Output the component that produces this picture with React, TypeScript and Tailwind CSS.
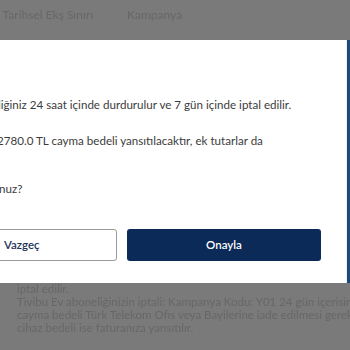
export default function App() {
  return (
    <div className="relative h-[350px] w-[350px] overflow-hidden bg-white font-['Lato','Noto_Sans',sans-serif]">
      {/* page behind the overlay */}
      <div className="h-full w-full bg-[#7a7a7a]">
        <div className="flex gap-[34px] pt-[6px] text-[12px] text-[#676767] blur-[0.7px]">
          <span className="-ml-[6px] whitespace-nowrap">y Tarihsel Ekş Sınırı</span>
          <span className="whitespace-nowrap">Kampanya</span>
        </div>
        <div className="mt-[258px] pl-[17px] text-[11.5px] leading-[13px] text-[#676767] blur-[0.7px]">
          <p className="whitespace-nowrap">iptal edilir.</p>
          <p className="whitespace-nowrap">Tivibu Ev aboneliğinizin iptali: Kampanya Kodu: Y01 24 gün içerisinde</p>
          <p className="whitespace-nowrap">cayma bedeli Türk Telekom Ofis veya Bayilerine iade edilmesi gereken</p>
          <p className="whitespace-nowrap">cihaz bedeli ise faturanıza yansıtılır.</p>
        </div>
      </div>

      {/* modal */}
      <div className="absolute left-0 top-[40px] flex h-[243px] w-[350px]">
        <div className="flex-1 bg-white pt-[57px] text-[11.6px] leading-[16px] text-[#3c3c3c]">
          <p className="-ml-[2px] whitespace-nowrap">liğiniz 24 saat içinde durdurulur ve 7 gün içinde iptal edilir.</p>
          <p className="mt-[20px] -ml-[3px] whitespace-nowrap">2780.0 TL cayma bedeli yansıtılacaktır, ek tutarlar da</p>
          <p className="mt-[32px] -ml-[1px] whitespace-nowrap">nuz?</p>
          <div className="mt-[32px] flex gap-[10px]">
            <button className="-ml-[4px] h-[32px] w-[121px] rounded-[3px] border border-[#9a9a9a] bg-white pl-[7px] text-left text-[11.5px] font-semibold text-[#1f3558]">
              Vazgeç
            </button>
            <button className="h-[32px] w-[194px] rounded-[3px] bg-[#0b2a58] text-[11.5px] font-semibold text-white">
              Onayla
            </button>
          </div>
        </div>
        <div className="w-px bg-[#e8eef5]" />
        <div className="w-[3px] bg-[#1d4a7c]" />
      </div>
    </div>
  );
}
